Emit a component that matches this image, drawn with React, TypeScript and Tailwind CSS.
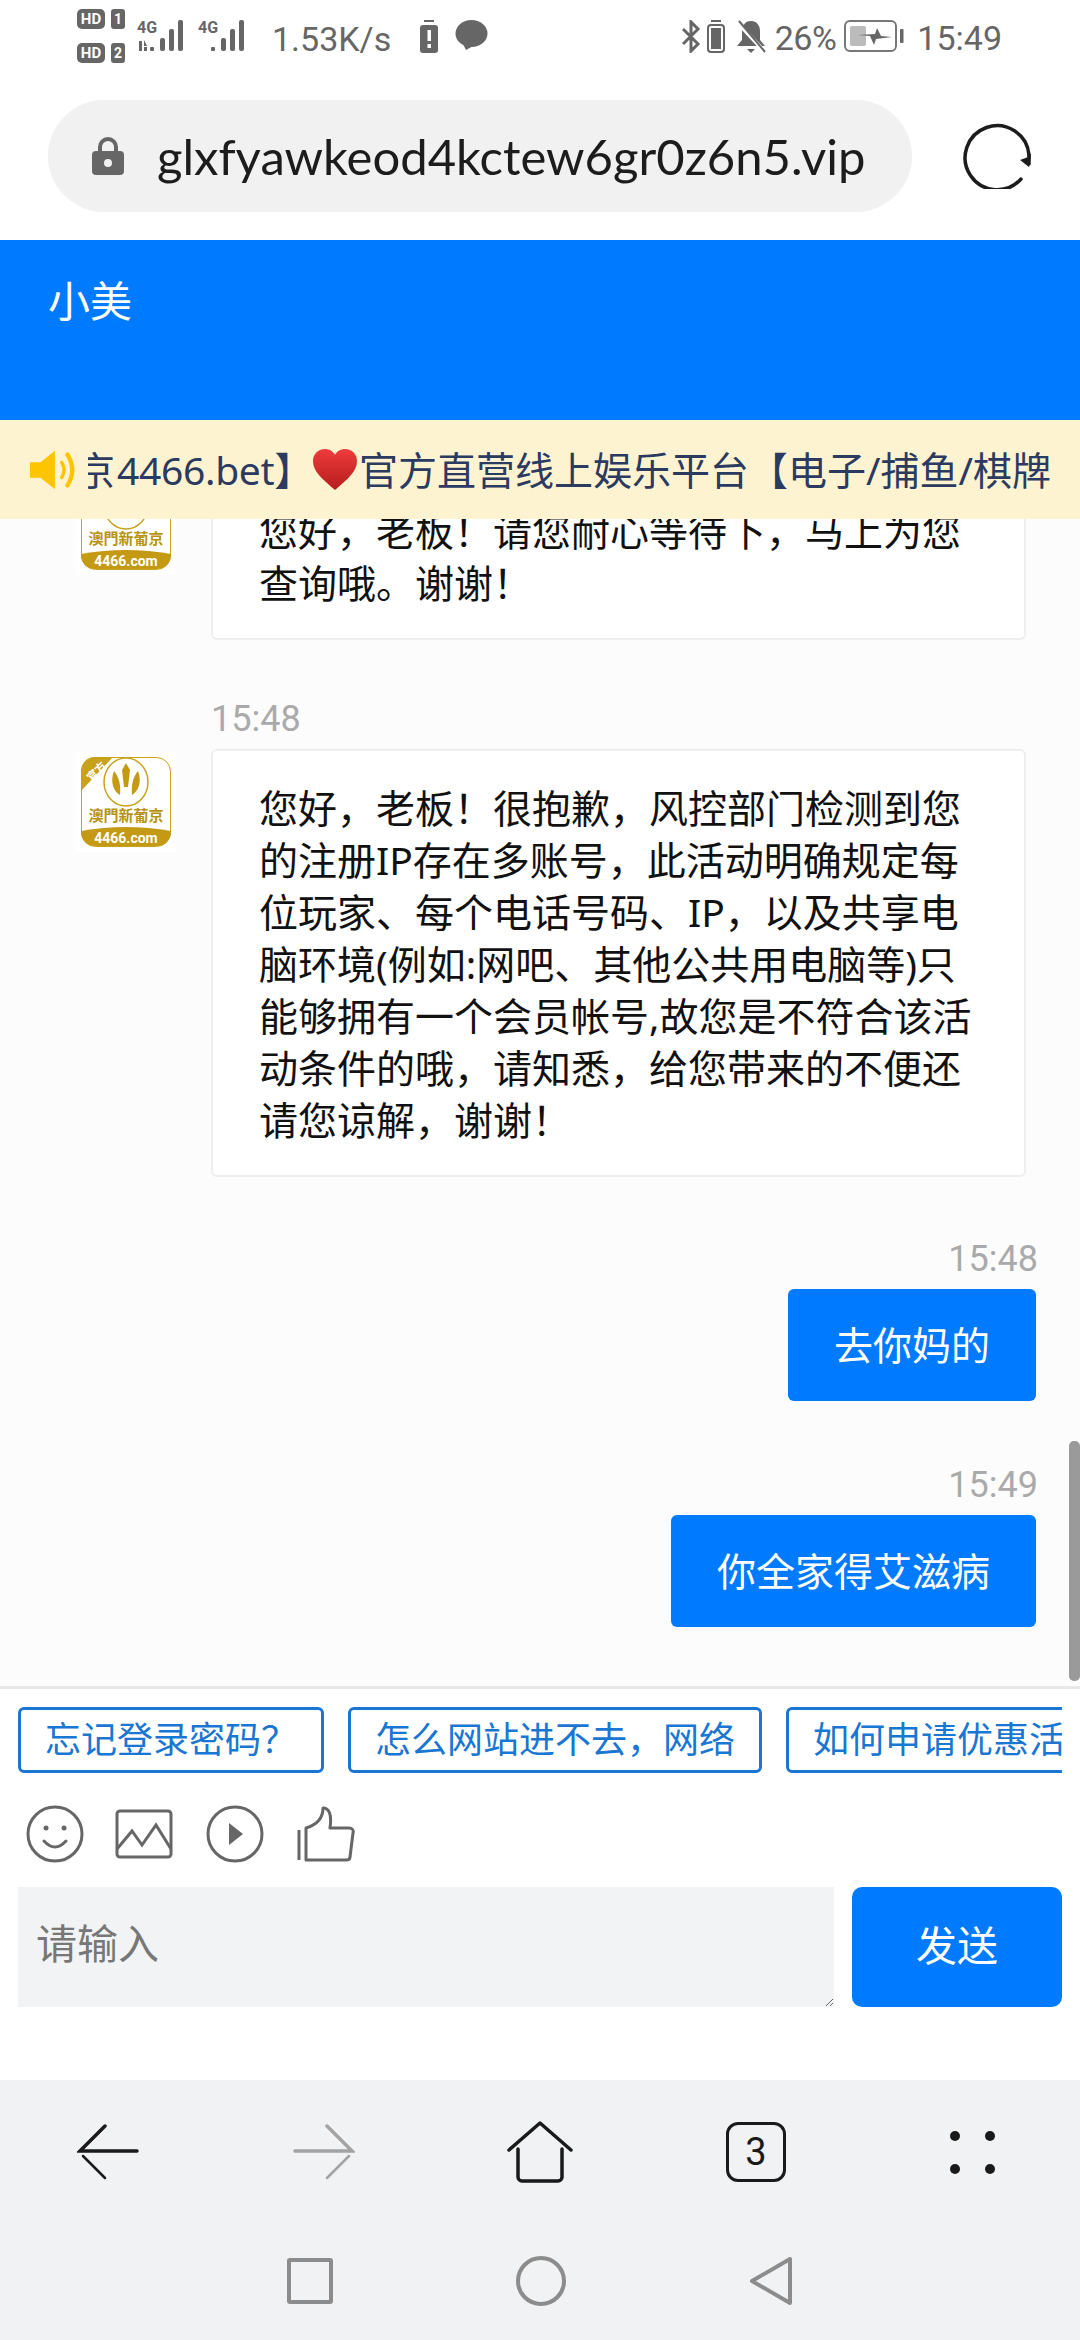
import React from "react";

const cjk = "font-['Noto_Sans','Noto_Sans_CJK_SC',sans-serif]";

const HdBadge = ({ n }: { n: string }) => (
  <div className="flex items-center gap-[6px]">
    <div className="flex h-[20px] w-[28px] items-center justify-center rounded-[5px] bg-[#666] text-[15px] leading-none font-bold text-white">
      HD
    </div>
    <div className="flex h-[20px] w-[14px] items-center justify-center rounded-[3px] bg-[#666] text-[14px] leading-none font-bold text-white">
      {n}
    </div>
  </div>
);

const Signal = ({ arrows }: { arrows?: boolean }) => (
  <svg className="overflow-visible" width="50" height="32" viewBox="0 0 50 32" fill="#666">
    <text x="0" y="13" fontSize="16" fontWeight="700" fontFamily="Roboto">4G</text>
    {arrows && <path d="M2 21h3v10H2zM7 20l3 6H7zM7 27h3v4H7z" />}
    <rect x="13" y="27" width="4" height="4" rx="1" />
    <rect x="23" y="18" width="5" height="13" rx="2" />
    <rect x="32" y="9" width="5" height="22" rx="2" />
    <rect x="41" y="0" width="5" height="31" rx="2" />
  </svg>
);

const StatusBar = () => (
  <div className="flex h-[100px] items-start justify-between pr-[78px] pl-[77px] font-['Roboto',sans-serif] text-[34px] leading-none text-[#666]">
    <div className="flex pt-[9px]">
      <div className="flex flex-col gap-[14px]">
        <HdBadge n="1" />
        <HdBadge n="2" />
      </div>
      <div className="mt-[11px] ml-[12px] flex gap-[11px]">
        <Signal arrows />
        <Signal />
      </div>
      <div className="mt-[13px] ml-[24px]">1.53K/s</div>
      <svg className="mt-[11px] ml-[29px]" width="18" height="33" viewBox="0 0 18 33" fill="#666">
        <rect x="4" y="0" width="10" height="2" />
        <rect x="0" y="5" width="18" height="28" rx="3" />
        <rect x="7.5" y="10" width="3.5" height="11" fill="#fff" />
        <rect x="7.5" y="24" width="3.5" height="4" fill="#fff" />
      </svg>
      <svg className="mt-[11px] ml-[17px]" width="33" height="30" viewBox="0 0 33 30" fill="#666">
        <ellipse cx="16.5" cy="13.5" rx="16" ry="13.5" />
        <path d="M7 22l4 8 9-5z" />
      </svg>
    </div>
    <div className="flex items-start pt-[20px]">
      <svg width="19" height="33" viewBox="0 0 19 33" fill="none" stroke="#666" strokeWidth="3">
        <path d="M1 9l15 15-7 7V2l7 7L1 24" />
      </svg>
      <svg className="ml-[6px]" width="18" height="33" viewBox="0 0 18 33" fill="#666">
        <rect x="4" y="0" width="10" height="2" />
        <rect x="1" y="5" width="16" height="27" rx="3" fill="none" stroke="#666" strokeWidth="2" />
        <rect x="4" y="8" width="10" height="21" />
      </svg>
      <svg className="ml-[11px]" width="30" height="33" viewBox="0 0 30 33" fill="#666">
        <path d="M15 1c6 0 9 5 9 10v9l5 6H1l5-6v-9C6 6 9 1 15 1z" />
        <path d="M11 29h8l-4 4z" />
        <path d="M1 2l28 30" stroke="#fff" strokeWidth="4" />
        <path d="M3 1l26 31" stroke="#666" strokeWidth="2" />
      </svg>
      <div className="mt-[1px] ml-[9px] tracking-[-0.5px]">26%</div>
      <svg className="ml-[8px]" width="60" height="32" viewBox="0 0 60 32" fill="none">
        <rect x="1" y="1" width="51" height="30" rx="5" stroke="#777" strokeWidth="2" />
        <rect x="6" y="6" width="16" height="20" rx="2" fill="#bbb" />
        <path d="M14 15l17-1 2-6 4 8 11 1-16 2-2 6-4-9z" fill="#666" />
        <rect x="56" y="9" width="3.5" height="14" rx="1" fill="#666" />
      </svg>
      <div className="mt-[1px] ml-[13px]">15:49</div>
    </div>
  </div>
);

const UrlBar = () => (
  <div className="flex h-[140px] items-start pl-[48px]">
    <div className="flex h-[112px] w-[864px] items-center rounded-[56px] bg-[#f1f1f1] pl-[44px]">
      <svg width="32" height="38" viewBox="0 0 32 38" fill="#666">
        <path d="M8 15V10a8 8 0 0116 0v5" fill="none" stroke="#666" strokeWidth="4" />
        <rect x="0" y="14" width="32" height="24" rx="4" />
        <circle cx="16" cy="26" r="4" fill="#f1f1f1" />
      </svg>
      <div className="ml-[33px] font-['Lato',sans-serif] text-[49px] leading-none whitespace-nowrap text-[#1c1c1c]">
        glxfyawkeod4kctew6gr0z6n5.vip
      </div>
    </div>
    <svg className="mt-[23px] ml-[51px]" width="68" height="66" viewBox="0 0 68 66" fill="none" stroke="#1c1c1c" strokeWidth="3.5" strokeLinecap="round">
      <path d="M58 56A32 32 0 1 1 66 32" />
      <path d="M57 37l9 7 2-11z" fill="#1c1c1c" stroke="none" />
      <path d="M66 32v9" />
    </svg>
  </div>
);

const Notice = () => (
  <div className={`flex h-[99px] shrink-0 items-center bg-[#fef3d1] pr-[28px] pl-[29px] ${cjk}`}>
    <svg className="shrink-0" width="50" height="42" viewBox="0 0 52 42" fill="#fdc500">
      <path d="M1 13h11L27 1v40L12 29H1z" />
      <path d="M34 13q5 8 0 16" fill="none" stroke="#fdc500" strokeWidth="3.5" strokeLinecap="round" />
      <path d="M40 5q10 16 0 32" fill="none" stroke="#fdc500" strokeWidth="4.5" strokeLinecap="round" />
    </svg>
    <div className="ml-[9px] min-w-0 flex-1 overflow-hidden">
      <div className="flex items-center text-[39px] leading-none whitespace-nowrap text-[#2b3a60]">
        <span className="w-[27px] shrink-0 overflow-hidden [direction:rtl]">京</span>
        <span className="ml-[2px] tracking-[-0.3px]">4466.bet】</span>
        <svg className="mr-[2px] shrink-0" width="44" height="42" viewBox="0 0 44 42">
          <defs>
            <linearGradient id="heart" x1="0" y1="0" x2="0" y2="1">
              <stop offset="0" stopColor="#ef3b3b" />
              <stop offset="1" stopColor="#b51d1d" />
            </linearGradient>
          </defs>
          <path d="M22 41C8 29 0 22 0 12 0 5 5 0 12 0c4 0 8 2 10 6 2-4 6-6 10-6 7 0 12 5 12 12 0 10-8 17-22 29z" fill="url(#heart)" />
        </svg>
        <span>官方直营线上娱乐平台【电子/捕鱼/棋牌</span>
      </div>
    </div>
  </div>
);

const Logo = () => (
  <div className="mt-[3px] flex h-[100px] w-[100px] shrink-0 items-center justify-center bg-white">
    <svg width="90" height="90" viewBox="0 0 90 90">
      <rect x="0.5" y="0.5" width="89" height="89" rx="14" fill="#fff" stroke="#c9a21c" strokeWidth="1" />
      <path d="M0 34V14A14 14 0 0114 0h18z" fill="#c9a21c" />
      <text x="6" y="22" fontSize="11" fill="#fff" fontWeight="700" transform="rotate(-45 12 18)" fontFamily="'Noto Sans CJK SC'">官方</text>
      <ellipse cx="45" cy="25" rx="22" ry="24" fill="#fff" stroke="#c9a21c" strokeWidth="1.5" />
      <path d="M45 6l4 7-2 17h-4l-2-17zM33 14c5 6 7 14 6 24-7-4-10-14-6-24zM57 14c-5 6-7 14-6 24 7-4 10-14 6-24z" fill="#c49a14" />
      <text x="45" y="64" textAnchor="middle" fontSize="15" fill="#b8930f" fontWeight="700" fontFamily="'Noto Sans CJK TC'">澳門新葡京</text>
      <path d="M0 74q45-8 90 0v1a14 14 0 01-14 14H14A14 14 0 010 75z" fill="#c49a14" />
      <text x="45" y="86" textAnchor="middle" fontSize="14" fill="#fff" fontWeight="700" fontFamily="Roboto">4466.com</text>
    </svg>
  </div>
);

const Bubble = ({ lines }: { lines: string[] }) => (
  <div className="w-[815px] rounded-[6px] border-2 border-[#eeeeee] bg-white px-[46px] pt-[31px] pb-[29px] text-[39px] leading-[52px] text-[#111]">
    {lines.map((l) => (
      <div key={l} className="whitespace-nowrap">
        {l}
      </div>
    ))}
  </div>
);

const Received = ({ time, lines, className }: { time?: string; lines: string[]; className?: string }) => (
  <div className={className}>
    {time && (
      <div className="ml-[211px] flex h-[60px] items-center font-['Roboto',sans-serif] text-[36px] text-[#aaaaaa]">
        {time}
      </div>
    )}
    <div className="flex pl-[76px]">
      <Logo />
      <div className="ml-[35px]">
        <Bubble lines={lines} />
      </div>
    </div>
  </div>
);

const Sent = ({ time, text, className }: { time: string; text: string; className?: string }) => (
  <div className={`flex flex-col items-end pr-[44px] ${className ?? ""}`}>
    <div className="-mr-[2px] flex h-[60px] items-center font-['Roboto',sans-serif] text-[36px] text-[#aaaaaa]">
      {time}
    </div>
    <div className="flex h-[112px] items-center rounded-[6px] bg-[#007aff] px-[46px] text-[39px] whitespace-nowrap text-white">
      {text}
    </div>
  </div>
);

const Messages = () => (
  <div className={`relative min-h-0 flex-1 overflow-hidden bg-[#fcfcfc] ${cjk}`}>
    <Received
      className="-mt-[47px]"
      lines={["您好，老板！请您耐心等待下，马上为您", "查询哦。谢谢！"]}
    />
    <Received
      className="mt-[49px]"
      time="15:48"
      lines={[
        "您好，老板！很抱歉，风控部门检测到您",
        "的注册IP存在多账号，此活动明确规定每",
        "位玩家、每个电话号码、IP，以及共享电",
        "脑环境(例如:网吧、其他公共用电脑等)只",
        "能够拥有一个会员帐号,故您是不符合该活",
        "动条件的哦，请知悉，给您带来的不便还",
        "请您谅解，谢谢！",
      ]}
    />
    <Sent className="mt-[52px]" time="15:48" text="去你妈的" />
    <Sent className="mt-[54px]" time="15:49" text="你全家得艾滋病" />
    <div className="absolute top-[922px] right-0 h-[240px] w-[11px] rounded-[5px] bg-[#9a9a9a]" />
  </div>
);

const Chip = ({ text }: { text: string }) => (
  <div className="flex h-[66px] shrink-0 items-center rounded-[6px] border-[3px] border-[#1976d2] px-[24px] text-[36px] whitespace-nowrap text-[#1976d2]">
    {text}
  </div>
);

const ToolIcons = () => (
  <div className="mt-[28px] flex h-[66px] items-center pl-[26px]">
    <svg width="58" height="58" viewBox="0 0 58 58" fill="none" stroke="#666" strokeWidth="3">
      <circle cx="29" cy="29" r="27" />
      <circle cx="20" cy="23" r="2.5" fill="#666" stroke="none" />
      <circle cx="38" cy="23" r="2.5" fill="#666" stroke="none" />
      <path d="M18 36q11 12 22 0" strokeLinecap="round" />
    </svg>
    <svg className="ml-[31px]" width="58" height="50" viewBox="0 0 58 50" fill="none" stroke="#666" strokeWidth="3">
      <rect x="2" y="2" width="54" height="46" rx="3" />
      <path d="M2 40l15-18 10 14 14-20 15 24" />
    </svg>
    <svg className="ml-[33px]" width="58" height="58" viewBox="0 0 58 58" fill="none" stroke="#666" strokeWidth="3">
      <circle cx="29" cy="29" r="27" />
      <path d="M23 18l14 11-14 11z" fill="#666" stroke="none" />
    </svg>
    <svg className="ml-[33px]" width="58" height="56" viewBox="0 0 58 56" fill="none" stroke="#666" strokeWidth="3">
      <path d="M9 22c10-3 17-9 17-20 6 0 9 6 7 20h19c3 0 5 2 4 5l-3 24c0 2-2 3-4 3H9z" strokeLinejoin="round" />
      <path d="M2 24v30" strokeWidth="3" />
    </svg>
  </div>
);

const InputPanel = () => (
  <div className={`flex h-[394px] shrink-0 flex-col border-t-[3px] border-[#e8e8e8] bg-white ${cjk}`}>
    <div className="mt-[18px] ml-[18px] flex w-[1044px] gap-[24px] overflow-hidden">
      <Chip text="忘记登录密码？" />
      <Chip text="怎么网站进不去，网络" />
      <Chip text="如何申请优惠活动" />
    </div>
    <ToolIcons />
    <div className="mt-[20px] flex gap-[18px] px-[18px]">
      <textarea
        readOnly
        placeholder="请输入"
        className="h-[120px] w-[816px] bg-[#f2f3f5] px-[18px] py-[30px] text-[41px] leading-[52px] outline-none placeholder:text-[#777]"
      />
      <div className="flex h-[120px] flex-1 items-center justify-center rounded-[10px] bg-[#007aff] pb-[2px] text-[41px] text-white">
        发送
      </div>
    </div>
  </div>
);

const BrowserNav = () => (
  <div className="flex h-[260px] shrink-0 flex-col bg-[#f1f2f4]">
    <div className="mt-[40px] grid h-[64px] grid-cols-[216px_216px_216px_216px_216px] items-center justify-items-center">
      <svg width="62" height="56" viewBox="0 0 62 56" fill="none" stroke="#1a1a1a" strokeWidth="3.5" strokeLinecap="round">
        <path d="M28 2L3 27h57" />
        <path d="M28 54L6 32" strokeWidth="2.5" />
      </svg>
      <svg width="62" height="56" viewBox="0 0 62 56" fill="none" stroke="#a3a3a3" strokeWidth="3.5" strokeLinecap="round">
        <path d="M34 2l25 25H2" />
        <path d="M34 54l22-22" strokeWidth="2.5" />
      </svg>
      <svg width="66" height="62" viewBox="0 0 66 62" fill="none" stroke="#1a1a1a" strokeWidth="3.5" strokeLinecap="round" strokeLinejoin="round">
        <path d="M2 29L33 2l31 27" />
        <path d="M11 28v28a4 4 0 004 4h36a4 4 0 004-4V28" />
      </svg>
      <div className="flex h-[60px] w-[60px] items-center justify-center rounded-[12px] border-[3.5px] border-[#1a1a1a] font-['Roboto',sans-serif] text-[38px] leading-none text-[#1a1a1a]">
        3
      </div>
      <div className="grid grid-cols-[10px_10px] gap-x-[25px] gap-y-[23px]">
        <div className="h-[10px] w-[10px] rounded-full bg-[#1a1a1a]" />
        <div className="h-[10px] w-[10px] rounded-full bg-[#1a1a1a]" />
        <div className="h-[10px] w-[10px] rounded-full bg-[#1a1a1a]" />
        <div className="h-[10px] w-[10px] rounded-full bg-[#1a1a1a]" />
      </div>
    </div>
    <div className="mt-[71px] flex h-[52px] items-center justify-center">
      <div className="h-[46px] w-[46px] rounded-[3px] border-[4px] border-[#8c8c8c]" />
      <div className="ml-[183px] h-[50px] w-[50px] rounded-full border-[4px] border-[#8c8c8c]" />
      <svg className="ml-[183px]" width="44" height="50" viewBox="0 0 44 50" fill="none" stroke="#8c8c8c" strokeWidth="4" strokeLinejoin="round">
        <path d="M41 3v44L3 25z" />
      </svg>
    </div>
  </div>
);

export default function App() {
  return (
    <div className="flex h-[2340px] w-[1080px] flex-col overflow-hidden bg-white">
      <StatusBar />
      <UrlBar />
      <div className={`h-[180px] shrink-0 bg-[#007aff] pt-[36px] pl-[48px] text-[42px] leading-[50px] text-white ${cjk}`}>
        小美
      </div>
      <Notice />
      <Messages />
      <InputPanel />
      <BrowserNav />
    </div>
  );
}
